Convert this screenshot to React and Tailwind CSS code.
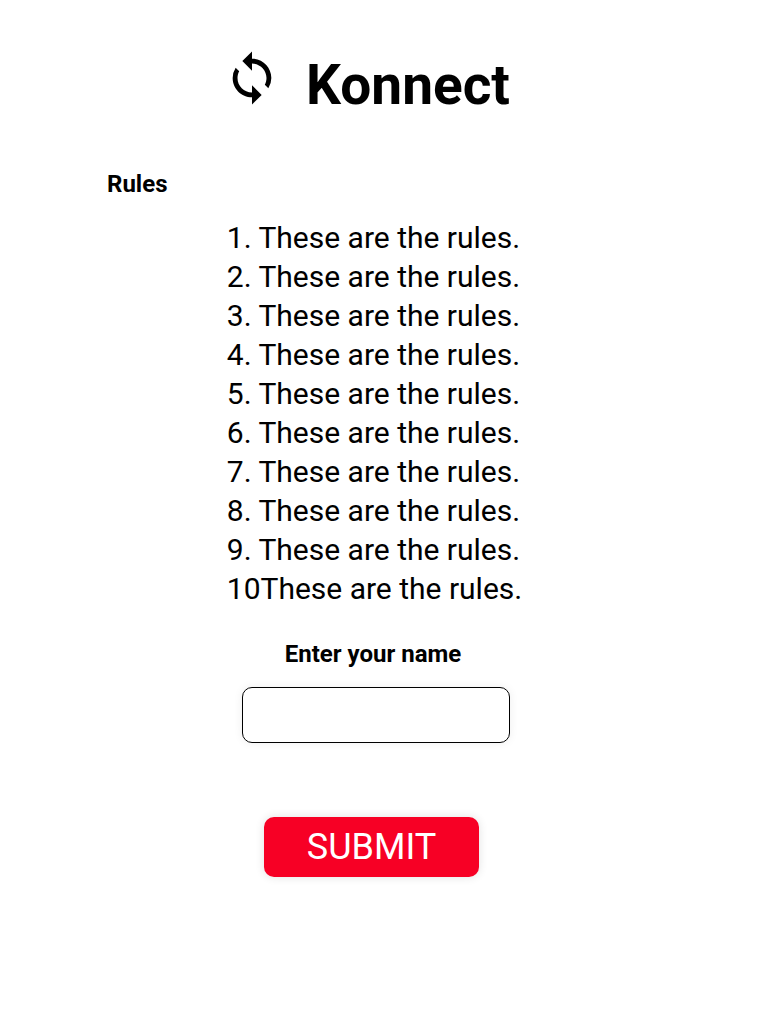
import { MdSync } from "react-icons/md";

const rules = Array.from({ length: 10 }, () => "These are the rules.");

export default function App() {
  return (
    <main className="flex min-h-screen flex-col items-center bg-white font-['Roboto',sans-serif] text-black">
      <header className="mt-[45px] flex items-start gap-[25px] pr-[35px]">
        <MdSync aria-hidden="true" className="h-[66px] w-[58px]" />
        <h1 className="pt-[7px] text-[55px] leading-[66px] font-bold">Konnect</h1>
      </header>
      <section className="mt-[52px] w-full">
        <h2 className="ml-[107px] text-2xl leading-7 font-bold">Rules</h2>
        <ol className="mx-auto mt-5 w-fit pr-[19px] text-[30px] leading-[39px]">
          {rules.map((rule, i) => (
            <li key={i} className="whitespace-pre">{i < 9 ? `${i + 1}. ` : i + 1}{rule}</li>
          ))}
        </ol>
      </section>
      <form className="mt-8 flex flex-col items-center" onSubmit={(e) => e.preventDefault()}>
        <label htmlFor="name" className="pr-[22px] text-2xl leading-7 font-bold">Enter your name</label>
        <input id="name" type="text" className="mt-[19px] mr-4 h-14 w-[268px] rounded-[10px] border border-black bg-white px-4 text-2xl shadow-[0_0_10px_rgba(0,0,0,0.07)]" />
        <button type="submit" className="mt-[74px] mr-[25px] h-[60px] w-[215px] rounded-[10px] bg-[#f70025] text-4xl text-white shadow-[0_0_10px_rgba(0,0,0,0.12)]">SUBMIT</button>
      </form>
    </main>
  );
}
